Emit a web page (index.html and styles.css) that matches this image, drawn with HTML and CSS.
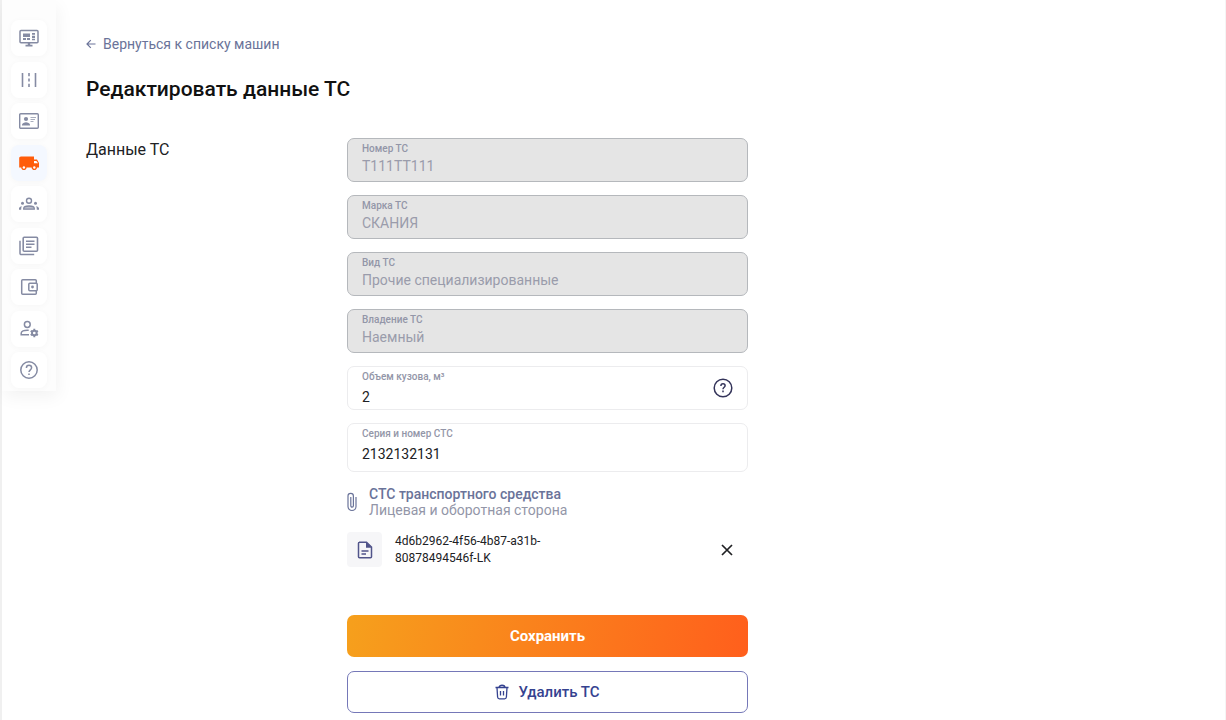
FILE: index.html
```
<!DOCTYPE html>
<html lang="ru">
<head>
	<meta charset="utf-8">
	<title>Редактировать данные ТС</title>
	<link rel="stylesheet" href="styles.css">
</head>
<body>
	<div class="page">
		<nav class="sidebar">
			<a href="#" class="nav-item" aria-label="Мониторинг">
				<svg viewBox="0 0 24 24">
					<rect x="3" y="4.5" width="18" height="12.2" rx="1" fill="none" stroke="currentColor" stroke-width="1.5"/>
					<path d="M6 7.5h7v3.500H6zM6 12h3v2H6zM10 12h3v2h-3zM15 7h3v1.800h-3zM15 9.700h3v2.300h-3zM15 12.800h3v1.500h-3zM10.800 17h2.400v1.800h2.300v1.600h-7v-1.600h2.300z" fill="currentColor"/>
				</svg>
			</a>
			<a href="#" class="nav-item" aria-label="Маршруты">
				<svg viewBox="0 0 24 24">
					<path d="M5.5 5v14M18.5 5v14M12 5v3.200M12 10.4v3.200M12 15.8V19" fill="none" stroke="currentColor" stroke-width="1.6"/>
				</svg>
			</a>
			<a href="#" class="nav-item" aria-label="Водители">
				<svg viewBox="0 0 24 24">
					<rect x="2.7" y="4.7" width="18.6" height="14.6" rx="1" fill="none" stroke="currentColor" stroke-width="1.4"/>
					<circle cx="9" cy="10" r="2.1" fill="currentColor"/>
					<path d="M5 16.5v-.8c0-1.500 2.500-2.500 4-2.500s4 1 4 2.500v.8z" fill="currentColor"/>
					<path d="M13.5 8.500H19M13.500 10.500H18M13.500 12.500h3" stroke="currentColor" stroke-width="1" stroke-opacity=".7"/>
				</svg>
			</a>
			<a href="#" class="nav-item active" aria-label="Машины">
				<svg viewBox="0 0 24 24">
					<path d="M20 8.500h-3V5.500H4c-1.100 0-1.800.8-1.800 1.800V16.500h2c0 1.500 1.200 2.600 2.700 2.600s2.700-1.100 2.700-2.600h5c0 1.500 1.200 2.600 2.700 2.600s2.700-1.100 2.700-2.600h2V12z" fill="currentColor"/>
					<circle cx="6.9" cy="16.5" r="1.2" fill="#fff"/>
					<circle cx="17.3" cy="16.5" r="1.2" fill="#fff"/>
					<path d="M17 10h2.400l1.700 2.300H17z" fill="#fff"/>
				</svg>
			</a>
			<a href="#" class="nav-item" aria-label="Контрагенты">
				<svg viewBox="0 0 24 24">
					<circle cx="12" cy="8.7" r="2.5" fill="none" stroke="currentColor" stroke-width="1.4"/>
					<circle cx="5.5" cy="11.2" r="1.5" fill="currentColor"/>
					<circle cx="18.5" cy="11.2" r="1.5" fill="currentColor"/>
					<path d="M6.700 17.200v-.7c0-1.500 2.600-2.500 5.300-2.500s5.300 1 5.300 2.500v.7z" fill="currentColor" fill-opacity=".55" stroke="currentColor" stroke-width="1.3"/>
					<path d="M2 17.800v-1.500c0-1 1.300-1.900 3-2.100-.6.700-.8 1.600-.8 3.600zM22 17.800v-1.500c0-1-1.300-1.900-3-2.100.6.700.8 1.600.8 3.600z" fill="currentColor"/>
				</svg>
			</a>
			<a href="#" class="nav-item" aria-label="Документы">
				<svg viewBox="0 0 24 24">
					<rect x="6.2" y="3.2" width="14.3" height="14" rx="1" fill="none" stroke="currentColor" stroke-width="1.6"/>
					<path d="M3 6.800v12.800c0 .6.400 1 1 1h13.200M9 7.200h8.500M9 10.200h8.500M9 13.200h5.500" fill="none" stroke="currentColor" stroke-width="1.5"/>
				</svg>
			</a>
			<a href="#" class="nav-item" aria-label="Кошелёк">
				<svg viewBox="0 0 24 24">
					<path d="M19.300 8V5.800c0-.6-.4-1-1-1H5.700c-.6 0-1 .4-1 1v12.400c0 .6.400 1 1 1h12.600c.6 0 1-.4 1-1V16" fill="none" stroke="currentColor" stroke-width="1.5"/>
					<rect x="11.8" y="8.2" width="8.4" height="7.6" rx="1" fill="none" stroke="currentColor" stroke-width="1.5"/>
					<circle cx="15.5" cy="12" r="1.4" fill="currentColor"/>
				</svg>
			</a>
			<a href="#" class="nav-item" aria-label="Профиль">
				<svg viewBox="0 0 24 24">
					<circle cx="10.3" cy="7.5" r="2.9" fill="none" stroke="currentColor" stroke-width="1.5"/>
					<path d="M12 17.800H4.200v-1.500c0-1.900 3-3.100 6-3.100h1.500" fill="none" stroke="currentColor" stroke-width="1.5"/>
					<circle cx="17.3" cy="16" r="2.3" fill="none" stroke="currentColor" stroke-width="1.9"/>
					<path d="M17.300 11.800v2M17.300 18.200v2M13.700 13.900l1.700 1M19.200 17.100l1.700 1M13.700 18.100l1.700-1M19.200 14.900l1.700-1" stroke="currentColor" stroke-width="1.9"/>
				</svg>
			</a>
			<a href="#" class="nav-item" aria-label="Помощь">
				<svg viewBox="0 0 24 24">
					<circle cx="12" cy="12" r="8.2" fill="none" stroke="currentColor" stroke-width="1.5"/>
					<path d="M9.400 10c0-1.600 1.100-2.700 2.600-2.700s2.600 1.100 2.600 2.500c0 2-2.600 2.100-2.600 4.300M12 15.500v1.600" fill="none" stroke="currentColor" stroke-width="1.5"/>
				</svg>
			</a>
		</nav>

		<main class="content">
			<a href="#" class="back-link">
				<svg viewBox="0 0 10 10"><path d="M9.500 5H1M4.800 1.200L1 5l3.800 3.800" fill="none" stroke="currentColor" stroke-width="1.2"/></svg>
				Вернуться к списку машин
			</a>
			<h1>Редактировать данные ТС</h1>

			<div class="form-row">
				<h2>Данные ТС</h2>
				<form class="form">
					<div class="field disabled">
						<label for="number">Номер ТС</label>
						<input type="text" id="number" value="Т111ТТ111" disabled>
					</div>
					<div class="field disabled">
						<label for="brand">Марка ТС</label>
						<input type="text" id="brand" value="СКАНИЯ" disabled>
					</div>
					<div class="field disabled">
						<label for="kind">Вид ТС</label>
						<input type="text" id="kind" value="Прочие специализированные" disabled>
					</div>
					<div class="field disabled">
						<label for="owner">Владение ТС</label>
						<input type="text" id="owner" value="Наемный" disabled>
					</div>
					<div class="field with-help">
						<div class="field-text">
							<label for="volume">Объем кузова, м³</label>
							<input type="text" id="volume" value="2">
						</div>
						<button type="button" class="icon-button" aria-label="Подсказка">
							<svg viewBox="0 0 20 20">
								<circle cx="10" cy="10" r="8.8" fill="none" stroke="currentColor" stroke-width="1.5"/>
								<path d="M7.900 8c0-1.400.9-2.200 2.100-2.200s2.100.8 2.100 1.900c0 1.500-2.100 1.600-2.100 3.500M10 12.600v1.700" fill="none" stroke="currentColor" stroke-width="1.5"/>
							</svg>
						</button>
					</div>
					<div class="field tall">
						<label for="sts">Серия и номер СТС</label>
						<input type="text" id="sts" value="2132132131">
					</div>

					<div class="attach">
						<svg viewBox="0 0 10 20"><path d="M9 5v9.500a4 4 0 0 1-8 0V4a2.700 2.700 0 0 1 5.400 0v9.800a1.300 1.300 0 0 1-2.600 0V5" fill="none" stroke="currentColor" stroke-width="1.2"/></svg>
						<div>
							<div class="attach-title">СТС транспортного средства</div>
							<div class="attach-note">Лицевая и оборотная сторона</div>
						</div>
					</div>

					<div class="file">
						<div class="file-icon">
							<svg viewBox="0 0 18 20">
								<path d="M3 2.200h7.500L15.500 7v9.800c0 .6-.4 1-1 1H3.500c-.6 0-1-.4-1-1V3.200c0-.6.400-1 1-1z" fill="none" stroke="currentColor" stroke-width="1.5"/>
								<path d="M10 2l6 5.800h-6z" fill="currentColor"/>
								<path d="M5.500 11h7M5.500 14h4.500" stroke="currentColor" stroke-width="1.5"/>
							</svg>
						</div>
						<div class="file-name">4d6b2962-4f56-4b87-a31b-80878494546f-LK</div>
						<button type="button" class="icon-button remove" aria-label="Удалить файл">
							<svg viewBox="0 0 20 20"><path d="M5 5l10 10M15 5L5 15" stroke="currentColor" stroke-width="1.7"/></svg>
						</button>
					</div>

					<button type="submit" class="btn btn-save">Сохранить</button>
					<button type="button" class="btn btn-delete">
						<svg viewBox="0 0 14 16">
							<path d="M.5 3.500h13M4 3.500C4 .5 10 .5 10 3.500M2 3.500l.6 9.500c.1 1 .7 1.800 1.800 1.800h5.200c1.100 0 1.700-.8 1.800-1.800L12 3.500M5.500 7v4.500M8.500 7v4.500" fill="none" stroke="currentColor" stroke-width="1.3"/>
						</svg>
						Удалить ТС
					</button>
				</form>
			</div>
		</main>
	</div>
</body>
</html>
```

FILE: styles.css
```
* {
	box-sizing: border-box;
}
body {
	margin: 0;
	font-family: Roboto, "Noto Sans", sans-serif;
	font-size: 14px;
	color: #202124;
	background-color: #fff;
}
h1, h2 {
	margin: 0;
}
svg {
	display: block;
	flex-shrink: 0;
}
.page {
	display: flex;
	align-items: flex-start;
	min-height: 100vh;
	border-left: 2px solid #f0f0f0;
	border-right: 1px solid #f5f5f5;
}

/* Side menu */
.sidebar {
	display: flex;
	flex-direction: column;
	justify-content: space-between;
	align-items: center;
	width: 54px;
	height: 391px;
	padding: 20px 0 3px;
	background-color: #fdfdfd;
	box-shadow: 2px 6px 16px rgba(0, 0, 0, 0.05);
}
.nav-item {
	display: flex;
	align-items: center;
	justify-content: center;
	width: 36px;
	height: 36px;
	border-radius: 8px;
	color: #858ba3;
	background-color: #fff;
	box-shadow: 0 1px 6px rgba(0, 0, 0, 0.03);
}
.nav-item svg {
	width: 24px;
	height: 24px;
}
.nav-item.active {
	color: #ff5c0a;
	background-color: #f4f8ff;
}

.content {
	flex: 1;
	padding: 36px 30px 8px;
}
.back-link {
	display: inline-flex;
	align-items: center;
	gap: 7px;
	line-height: 16px;
	color: #6a7399;
	text-decoration: none;
}
.back-link svg {
	width: 10px;
	height: 10px;
}
h1 {
	margin-top: 23px;
	font-size: 21px;
	font-weight: 500;
	line-height: 28px;
	color: #111;
}
.form-row {
	display: flex;
	margin-top: 35px;
}
h2 {
	width: 261px;
	padding-top: 2px;
	font-size: 16px;
	font-weight: 400;
	line-height: 20px;
}

/* Form */
.form {
	width: 100%;
	max-width: 401px;
}
.field {
	display: flex;
	flex-direction: column;
	height: 44px;
	margin-bottom: 13px;
	padding: 4px 14px;
	border: 1px solid #ececee;
	border-radius: 7px;
}
.field label {
	display: block;
	font-size: 10px;
	font-weight: 500;
	line-height: 12px;
	color: #9396a8;
}
.field input {
	display: block;
	width: 100%;
	height: 24px;
	padding: 0;
	border: 0;
	outline: 0;
	font: inherit;
	color: #202124;
	background: transparent;
}
.field.disabled {
	border-color: #b5b8bc;
	background-color: #e5e5e5;
}
.field.disabled input {
	color: #9a9cab;
}
.field.with-help {
	flex-direction: row;
	align-items: flex-start;
}
.field-text {
	flex: 1;
}
.field.tall {
	height: 49px;
	margin-bottom: 14px;
}
.field.tall input,
.field-text input {
	height: 28px;
}
.icon-button {
	align-self: center;
	padding: 0;
	border: 0;
	color: #34345a;
	background: none;
	cursor: pointer;
}
.icon-button svg {
	width: 20px;
	height: 20px;
}

.attach {
	display: flex;
	align-items: center;
	gap: 12px;
	line-height: 16px;
}
.attach svg {
	width: 10px;
	height: 20px;
	color: #6a7399;
}
.attach-title {
	font-weight: 500;
	color: #6a7399;
}
.attach-note {
	color: #9396a8;
}

.file {
	display: flex;
	align-items: center;
	margin: 14px 0 48px;
}
.file-icon {
	display: flex;
	align-items: center;
	justify-content: center;
	width: 35px;
	height: 35px;
	border-radius: 4px;
	color: #51548a;
	background-color: #f6f6f8;
}
.file-icon svg {
	width: 18px;
	height: 20px;
}
.file-name {
	width: 165px;
	margin-left: 13px;
	font-size: 12px;
	line-height: 17px;
}
.remove {
	margin-left: auto;
	margin-right: 11px;
	color: #202124;
}

.btn {
	display: flex;
	align-items: center;
	justify-content: center;
	gap: 9px;
	width: 100%;
	height: 42px;
	border: 0;
	border-radius: 7px;
	font: inherit;
	font-size: 15px;
	font-weight: 500;
	cursor: pointer;
}
.btn-save {
	font-weight: 700;
	color: #fff;
	background: linear-gradient(100deg, #f6a01c, #ff5f1c);
}
.btn-delete {
	margin-top: 14px;
	border: 1px solid #7578b8;
	color: #354290;
	background-color: #fff;
}
.btn-delete svg {
	width: 14px;
	height: 16px;
}
```
